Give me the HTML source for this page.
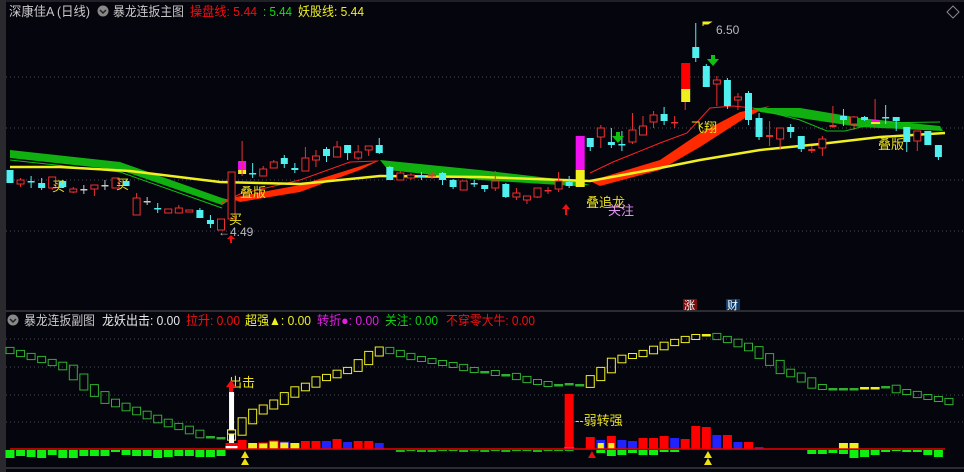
<!DOCTYPE html>
<html><head><meta charset="utf-8"><style>
html,body{margin:0;padding:0;background:#05050d;width:964px;height:472px;overflow:hidden}
svg{display:block}
text{font-family:"Liberation Sans","Noto Sans CJK SC",sans-serif}
</style></head><body>
<svg id="s" width="964" height="472" xmlns="http://www.w3.org/2000/svg">
<rect width="964" height="472" fill="#05050d"/>
<rect x="0" y="0" width="6" height="472" fill="#2a2a2e"/>
<line x1="6" y1="1" x2="964" y2="1" stroke="#3a3a3e"/>
<line x1="6" y1="311" x2="964" y2="311" stroke="#3a3a3e" stroke-width="1.5"/>
<line x1="6" y1="468" x2="964" y2="468" stroke="#3a3a3e" stroke-width="1.5"/>
<g stroke="#4a4a55" stroke-dasharray="1,3">
<line x1="6" y1="77" x2="964" y2="77"/><line x1="6" y1="128" x2="964" y2="128"/>
<line x1="6" y1="180" x2="964" y2="180"/><line x1="6" y1="231" x2="964" y2="231"/>
<line x1="6" y1="339" x2="964" y2="339"/><line x1="6" y1="367" x2="964" y2="367"/>
<line x1="6" y1="395" x2="964" y2="395"/><line x1="6" y1="422" x2="964" y2="422"/>
</g>
<g id="g"></g>
<line x1="10" y1="449" x2="945" y2="449" stroke="#e00" stroke-width="1.5"/>
<!-- titles -->
<g font-size="13" lengthAdjust="spacingAndGlyphs">
<text x="9" y="16" fill="#c8c8c8" textLength="81" lengthAdjust="spacingAndGlyphs">深康佳A (日线)</text>
<text x="113" y="16" fill="#c8c8c8" textLength="71" lengthAdjust="spacingAndGlyphs">暴龙连扳主图</text>
<text x="190" y="16" fill="#f01010" textLength="67" lengthAdjust="spacingAndGlyphs">操盘线: 5.44</text>
<text x="263" y="16" fill="#10e010" textLength="29" lengthAdjust="spacingAndGlyphs">: 5.44</text>
<text x="298" y="16" fill="#f0f020" textLength="66" lengthAdjust="spacingAndGlyphs">妖股线: 5.44</text>
<text x="24" y="325" fill="#c8c8c8" textLength="71" lengthAdjust="spacingAndGlyphs">暴龙连扳副图</text>
<text x="102" y="325" fill="#e8e8e8" textLength="78" lengthAdjust="spacingAndGlyphs">龙妖出击: 0.00</text>
<text x="186" y="325" fill="#f01010" textLength="54" lengthAdjust="spacingAndGlyphs">拉升: 0.00</text>
<text x="245" y="325" fill="#f0f020" textLength="66" lengthAdjust="spacingAndGlyphs">超强▲: 0.00</text>
<text x="317" y="325" fill="#e020e0" textLength="62" lengthAdjust="spacingAndGlyphs">转折●: 0.00</text>
<text x="385" y="325" fill="#10d010" textLength="53" lengthAdjust="spacingAndGlyphs">关注: 0.00</text>
<text x="446" y="325" fill="#f01010" textLength="89" lengthAdjust="spacingAndGlyphs">不穿零大牛: 0.00</text>
</g>
<circle cx="103" cy="11" r="5.5" fill="#888"/><path d="M100,10 l3,3 l3,-3" stroke="#222" fill="none" stroke-width="1.5"/>
<circle cx="13" cy="320" r="5.5" fill="#888"/><path d="M10,319 l3,3 l3,-3" stroke="#222" fill="none" stroke-width="1.5"/>
<path d="M953,6 l6,6 l-6,6 l-6,-6z" stroke="#888" fill="none"/>
<rect x="683" y="299" width="14" height="11" fill="#7a0c0c"/><text x="684" y="309" font-size="11" fill="#fff">涨</text>
<rect x="726" y="299" width="14" height="11" fill="#0c3a6a"/><text x="727" y="309" font-size="11" fill="#fff">财</text>
<!-- chart labels -->
<g font-size="13" fill="#e8e020">
<text x="52" y="191">买</text><text x="116" y="189">买</text><text x="229" y="224">买</text>
<text x="240" y="197">叠版</text><text x="878" y="149">叠版</text>
<text x="586" y="207">叠追龙</text><text x="691" y="132">飞翔</text>
<text x="229" y="387">出击</text><text x="575" y="425">--弱转强</text>
</g>
<text x="608" y="215" font-size="13" fill="#e090f0">关注</text>
<text x="218" y="236" font-size="12" fill="#b8b8c0">←4.49</text>
<text x="716" y="34" font-size="12" fill="#b8b8c0">6.50</text>
<path d="M703,26 v-4 h8 l-3,2 h-5" stroke="#f0f020" fill="#f0f020"/>
<path d="M231,235 l-4,4 h3 v4 h2 v-4 h3z" fill="#f01010"/>
<path d="M566,204 l-4,5 h3 v6 h2 v-6 h3z" fill="#f01010"/>
<path d="M618,132 h-2 v4 h-4 l6,7 l6,-7 h-4 v-4z" fill="#10c010"/>
<path d="M713,55 h-2 v4 h-4 l6,7 l6,-7 h-4 v-4z" fill="#10c010"/>
<path d="M231,380 l-5,7 h3 v5 h4 v-5 h3z" fill="#f01010"/>
<path d="M245,451 l-4,7 h8z M245,458 l-4,7 h8z" fill="#f0e010"/>
<path d="M708,451 l-4,7 h8z M708,458 l-4,7 h8z" fill="#f0e010"/>
<path d="M592,451 l-4,7 h8z" fill="#e01010"/>
</svg>
<script>
var g=document.getElementById('g'),h='';
function X(i){return 10+i*10.55}
function R(x,y,w,hh,f,s){h+='<rect x="'+x+'" y="'+y+'" width="'+w+'" height="'+hh+'" fill="'+(f||'none')+'"'+(s?' stroke="'+s+'"':'')+'/>'}
function L(a,b,c,d,s,w){h+='<line x1="'+a+'" y1="'+b+'" x2="'+c+'" y2="'+d+'" stroke="'+s+'" stroke-width="'+(w||1)+'"/>'}
function P(pts,s,w){h+='<polyline points="'+pts+'" fill="none" stroke="'+s+'" stroke-width="'+w+'"/>'}
h+='<polygon points="10,150 120,162 222,198 230,200 222,205 120,170 10,158" fill="#10b010"/>';
P('10,160 120,172 222,208','#10c010',1);
h+='<polygon points="230,198 300,185 380,160 360,170 300,192 240,202" fill="#ff2a00"/>';
h+='<polygon points="380,160 480,170 575,181 590,185 575,186 480,180 388,170" fill="#10b010"/>';
h+='<polygon points="590,181 660,160 700,133 740,112 770,106 745,118 700,147 660,170 600,186" fill="#ff2a00"/>';
h+='<polygon points="755,108 800,108 860,118 940,126 943,131 860,127 800,118 760,112" fill="#10b010"/>';
P('222,203 240,194 300,180 350,162 378,161','#ff2020',1);
P('590,173 613,162 660,143 687,133 710,108 733,106 753,108','#ff2020',1);
P('753,108 800,120 827,131 845,131 877,123 940,122','#10c010',1);
P('10,167 60,167 130,171 220,182 300,184 380,176 480,177 590,181 650,170 700,160 760,150 820,144 880,137 945,133','#f0f020',2.5);
var C=[[0,'c',170,183,170,183],[1,'r',180,184,178,187],[2,'c',181,182,176,188],[3,'c',183,188,178,190],[4,'r',177,188,177,190],[5,'c',181,187,180,188],[6,'r',189,192,187,193],[7,'g',189,190,185,194],[8,'r',185,189,185,196],[9,'g',185,186,180,190],[10,'r',178,188,178,188],[11,'c',181,186,180,186],[12,'r',198,215,193,215],[13,'g',201,202,197,205],[14,'c',208,209,203,213],[15,'r',209,213,209,213],[16,'r',208,213,205,213],[17,'r',210,212,210,212],[18,'c',210,218,208,218],[19,'c',220,224,215,228],[20,'r',219,230,219,230],[21,'r',172,219,172,219],[23,'c',173,174,163,178],[24,'r',169,176,166,176],[25,'r',162,168,160,168],[26,'c',158,164,155,168],[27,'c',168,170,163,173],[28,'r',158,171,147,171],[29,'r',156,160,150,167],[30,'c',149,156,147,162],[31,'r',147,157,141,157],[32,'c',145,153,145,160],[33,'r',152,158,145,160],[34,'r',146,150,146,156],[35,'c',145,153,138,154],[36,'c',167,180,166,180],[37,'r',173,180,171,180],[38,'r',175,178,173,180],[39,'c',176,177,172,180],[40,'r',175,176,172,179],[41,'c',173,180,172,185],[42,'c',180,187,179,189],[43,'r',181,190,181,190],[44,'c',183,184,180,187],[45,'c',185,189,185,192],[46,'r',181,188,171,191],[47,'c',184,197,183,198],[48,'r',193,197,188,200],[49,'r',196,200,196,204],[50,'r',188,197,188,198],[51,'x',190,191,187,194],[52,'r',181,189,172,192],[53,'c',182,186,176,188],[55,'c',138,147,138,151],[56,'r',128,137,125,148],[57,'c',142,145,128,148],[58,'c',144,145,131,151],[59,'r',130,142,113,144],[60,'r',126,135,116,135],[61,'r',115,122,111,128],[62,'c',114,121,107,125],[63,'x',122,123,116,128],[65,'c',47,58,23,62],[66,'c',66,87,64,87],[67,'r',80,84,76,106],[68,'c',80,106,78,109],[69,'r',97,100,93,110],[70,'c',93,120,91,125],[71,'c',118,137,113,140],[72,'x',135,137,121,146],[73,'r',128,139,128,150],[74,'c',127,132,124,138],[75,'c',136,149,136,152],[76,'x',149,151,146,153],[77,'r',139,148,136,156],[78,'x',125,127,106,128],[79,'c',116,120,109,126],[80,'r',117,124,116,130],[81,'c',117,120,116,121],[83,'c',117,118,105,124],[84,'c',117,121,117,131],[85,'c',127,142,127,152],[86,'r',131,141,131,151],[87,'c',131,145,131,145],[88,'c',145,157,145,160]];
C.forEach(function(c){var x=X(c[0]),col=c[1]=='c'?'#50f0f0':c[1]=='g'?'#c8c8c8':'#f03030';
L(x,c[4],x,c[5],col,1);
if(c[1]=='r')R(x-3.5,c[2],7,c[3]-c[2],'#05050d',col);
else R(x-3.5,c[2],7,Math.max(1.5,c[3]-c[2]),col);});
R(X(22)-4,161,8,9,'#f010f0');R(X(22)-4,170,8,4,'#f0f020');L(X(22),141,X(22),176,'#f03030');
R(X(54)-4,136,9,34,'#f010f0');R(X(54)-4,170,9,17,'#f0f020');
L(X(64),63,X(64),110,'#f03030');R(X(64)-4,63,9,26,'#f00');R(X(64)-4,89,9,13,'#f0f020');
L(X(82),99,X(82),127,'#f03030');R(X(82)-4,120,9,2,'#f010f0');R(X(82)-4,122,9,2,'#f0f020');
var V=[352,355,358,361,364,368,377,387,394,401,405,409,413,417,421,425,428,432,436,437,438,432,421,412,407,402,395,389,385,379,376,372,369,362,354,349,352,355,358,360,362,364,366,369,371,372,374,375,378,381,383,385,385,384,385,378,370,361,357,355,352,348,344,341,338,336,335,338,341,345,349,356,363,371,375,380,386,388,389,389,389,388,388,387,391,393,396,398,400,403];
var yel={};for(var i=21;i<=35;i++)yel[i]=1;for(i=55;i<=66;i++)yel[i]=1;yel[81]=yel[82]=1;
for(i=0;i<V.length;i++){var a=i?V[i-1]:V[0]-3,b=V[i],d=Math.abs(b-a),col=yel[i]?'#f0f020':'#30b030';
if(d<=1){R(X(i)-4.5,b-1,9,2.5,col);continue;}
var hh=Math.max(5,d*1.4+2),c=(a+b)/2;R(X(i)-4,c-hh/2,8,hh,'none',col);}
var G=[8,6,7,8,5,8,8,6,6,6,2,5,6,6,8,7,6,6,7,7,6];
G.forEach(function(v,i){R(X(i)-4.5,450,9,v,'#10f010')});
for(i=37;i<54;i++){R(X(i)-4.5,450,9,[2,1,2,2,1,1,2,1,2,1,2,1,1,2,1,1,1][i-37],'#10c010')}
var G2={56:3,57:6,58:5,59:3,60:5,61:5,62:2,63:2,76:4,77:4,78:3,79:4,80:8,81:7,82:5,83:2,84:1,85:2,86:2,87:5,88:7};
for(var k in G2)R(X(+k)-4.5,450,9,G2[k],'#10f010');
R(X(21)-2.5,392,5,57,'#fff');R(X(21)-6,443,12,6,'#f00');R(X(21)-6,446,12,3,'#fff');R(X(21)-4,430,8,4,'#05050d','#f0f020');
var B=[[22,440,'#f00'],[23,443,'#f0f020'],[24,443,'#f0f020','#f00'],[25,441,'#f0f020','#f00'],[26,442,'#f0f020','#30f'],[27,443,'#f0f020'],[28,441,'#f00'],[29,441,'#f00'],[30,441,'#22f'],[31,439,'#f00'],[32,442,'#22f'],[33,441,'#f00'],[34,441,'#f00'],[35,443,'#22f'],
[55,437,'#f00'],[56,440,'#22f'],[57,436,'#f00'],[58,440,'#22f'],[59,441,'#22f'],[60,438,'#f00'],[61,438,'#f00'],[62,436,'#f00'],[63,438,'#22f'],[64,439,'#f00'],[65,426,'#f00'],[66,427,'#f00'],[67,435,'#22f'],[68,435,'#f00'],[69,442,'#22f'],[70,442,'#f00'],[71,447,'#22f'],[79,443,'#f0f020'],[80,443,'#f0f020']];
B.forEach(function(b){R(X(b[0])-4.5,b[1],9,449-b[1],b[2],b[3])});
R(X(56)-3,443,6,6,'#f0f020');R(X(57)-3,443,6,6,'#f0f020');
R(X(53)-4.5,394,9,55,'#f00');R(X(53)-5,447,10,2,'#f0f');
g.innerHTML=h;
</script>
</body></html>
